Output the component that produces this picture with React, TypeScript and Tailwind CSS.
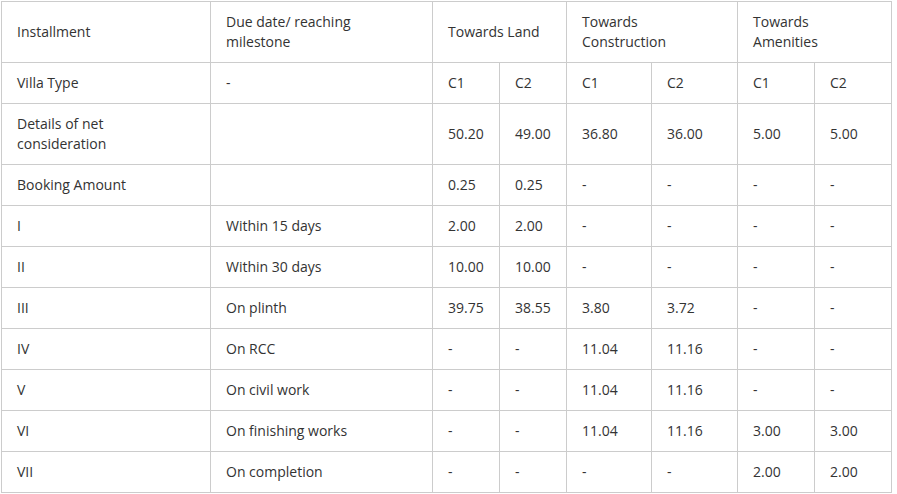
const dash = "-";

const rows: string[][] = [
  ["Booking Amount", "", "0.25", "0.25", dash, dash, dash, dash],
  ["I", "Within 15 days", "2.00", "2.00", dash, dash, dash, dash],
  ["II", "Within 30 days", "10.00", "10.00", dash, dash, dash, dash],
  ["III", "On plinth", "39.75", "38.55", "3.80", "3.72", dash, dash],
  ["IV", "On RCC", dash, dash, "11.04", "11.16", dash, dash],
  ["V", "On civil work", dash, dash, "11.04", "11.16", dash, dash],
  ["VI", "On finishing works", dash, dash, "11.04", "11.16", "3.00", "3.00"],
  ["VII", "On completion", dash, dash, dash, dash, "2.00", "2.00"],
];

const td = "border border-[#cccccc] px-[15px] py-[10px] align-middle text-left font-normal";

export default function App() {
  return (
    <div className="bg-white min-h-screen pt-[1px] pl-[1px]" style={{ fontFamily: '"Open Sans", sans-serif' }}>
      <table className="border-collapse table-fixed w-[890px] text-[14px] leading-[20px] text-[#333333]">
        <colgroup>
          <col className="w-[209px]" />
          <col className="w-[222px]" />
          <col className="w-[67px]" />
          <col className="w-[67px]" />
          <col className="w-[85px]" />
          <col className="w-[86px]" />
          <col className="w-[77px]" />
          <col className="w-[77px]" />
        </colgroup>
        <tbody>
          <tr>
            <td className={td}>Installment</td>
            <td className={td}>
              Due date/ reaching
              <br />
              milestone
            </td>
            <td className={td} colSpan={2}>Towards Land</td>
            <td className={td} colSpan={2}>
              Towards
              <br />
              Construction
            </td>
            <td className={td} colSpan={2}>
              Towards
              <br />
              Amenities
            </td>
          </tr>
          <tr>
            <td className={td}>Villa Type</td>
            <td className={td}>-</td>
            <td className={td}>C1</td>
            <td className={td}>C2</td>
            <td className={td}>C1</td>
            <td className={td}>C2</td>
            <td className={td}>C1</td>
            <td className={td}>C2</td>
          </tr>
          <tr>
            <td className={td}>
              Details of net
              <br />
              consideration
            </td>
            <td className={td}></td>
            <td className={td}>50.20</td>
            <td className={td}>49.00</td>
            <td className={td}>36.80</td>
            <td className={td}>36.00</td>
            <td className={td}>5.00</td>
            <td className={td}>5.00</td>
          </tr>
          {rows.map((r, i) => (
            <tr key={i}>
              {r.map((c, j) => (
                <td key={j} className={td}>
                  {c}
                </td>
              ))}
            </tr>
          ))}
        </tbody>
      </table>
    </div>
  );
}
